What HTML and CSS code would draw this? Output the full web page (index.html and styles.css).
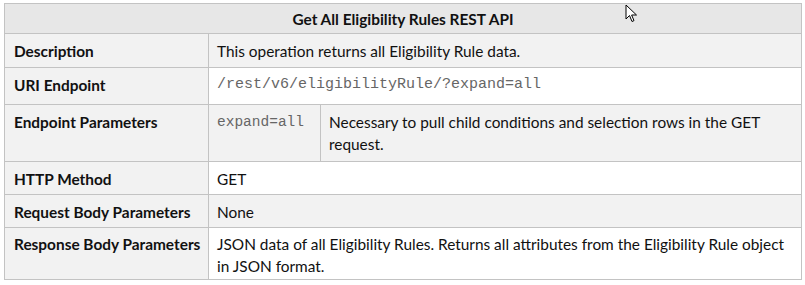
FILE: index.html
```html
<!DOCTYPE html>
<html>
<head>
<meta charset="utf-8">
<link rel="stylesheet" href="styles.css">
</head>
<body>
<div class="wrap">
<table class="api">
  <colgroup>
    <col class="c1">
    <col class="c2">
    <col class="c3">
  </colgroup>
  <tr class="r-title">
    <th colspan="3" class="title">Get All Eligibility Rules REST API</th>
  </tr>
  <tr class="r-desc shaded">
    <td class="label">Description</td>
    <td colspan="2">This operation returns all Eligibility Rule data.</td>
  </tr>
  <tr class="r-uri">
    <td class="label">URI Endpoint</td>
    <td colspan="2" class="mono uri">/rest/v6/eligibilityRule/?expand=all</td>
  </tr>
  <tr class="r-params shaded">
    <td class="label">Endpoint Parameters</td>
    <td class="mono param">expand=all</td>
    <td>Necessary to pull child conditions and selection rows in the GET request.</td>
  </tr>
  <tr class="r-method">
    <td class="label">HTTP Method</td>
    <td colspan="2">GET</td>
  </tr>
  <tr class="r-req shaded">
    <td class="label">Request Body Parameters</td>
    <td colspan="2">None</td>
  </tr>
  <tr class="r-resp">
    <td class="label">Response Body Parameters</td>
    <td colspan="2">JSON data of all Eligibility Rules. Returns all attributes from the Eligibility Rule object in JSON format.</td>
  </tr>
</table>
<svg class="cursor" width="14" height="20" viewBox="0 0 14 20">
  <path d="M1 1 L1 15 L4.5 11.5 L7 17.5 L9 16.6 L6.6 11 L11.5 11 Z" fill="#fff" stroke="#000" stroke-width="1" stroke-linejoin="miter"/>
</svg>
</div>
</body>
</html>
```
FILE: styles.css
```css
html, body {
  margin: 0;
  padding: 0;
  background: #ffffff;
}
.wrap {
  position: relative;
  padding: 3px 0 0 4px;
}
.api {
  border-collapse: collapse;
  width: 798px;
  table-layout: fixed;
  font-family: Lato, "Open Sans", sans-serif;
  font-size: 15.4px;
  line-height: 22px;
  color: #111;
}
.c1 { width: 204px; }
.c2 { width: 112px; }
.api th, .api td {
  border: 1px solid #c3c3c3;
  padding: 6px 8px 3px 8px;
  vertical-align: top;
  text-align: left;
  background: #ffffff;
}
.api td.label {
  background: #f2f2f2;
  font-weight: bold;
  padding-left: 9px;
  white-space: nowrap;
}
.shaded td {
  background: #f2f2f2;
}
.api th.title {
  background: #e7e7e7;
  text-align: center;
  font-weight: bold;
  vertical-align: middle;
  padding-top: 2px;
  padding-bottom: 2px;
}
.r-resp td {
  padding-top: 5px;
  padding-bottom: 2px;
}
.r-resp td.label {
  padding-top: 5px;
}
.mono {
  font-family: "Liberation Mono", "Courier New", monospace;
  color: #666;
}
.uri {
  font-size: 15px;
  padding-top: 9px;
}
.param {
  font-size: 14.5px;
}
.r-title { height: 30px; }
.r-desc { height: 34px; }
.r-uri { height: 37px; }
.r-params { height: 57px; }
.r-method { height: 33px; }
.r-req { height: 33px; }
.r-resp { height: 51px; }
.cursor {
  position: absolute;
  left: 625px;
  top: 4px;
}
```
